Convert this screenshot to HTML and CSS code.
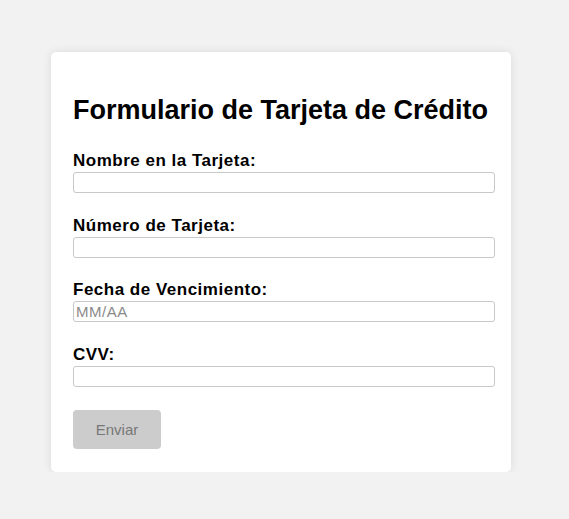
FILE: index.html
```html
<!DOCTYPE html>
<html lang="es">
<head>
<meta charset="utf-8">
<title>Formulario de Tarjeta de Crédito</title>
<link rel="stylesheet" href="styles.css">
</head>
<body>
<div class="card">
  <h2 class="title">Formulario de Tarjeta de Crédito</h2>
  <form class="form">
    <div class="group">
      <label class="label" for="nombre">Nombre en la Tarjeta:</label>
      <input class="input" id="nombre" type="text">
    </div>
    <div class="group">
      <label class="label" for="numero">Número de Tarjeta:</label>
      <input class="input" id="numero" type="text">
    </div>
    <div class="group">
      <label class="label" for="fecha">Fecha de Vencimiento:</label>
      <input class="input" id="fecha" type="text" placeholder="MM/AA">
    </div>
    <div class="group">
      <label class="label" for="cvv">CVV:</label>
      <input class="input" id="cvv" type="text">
    </div>
    <button class="button" type="button">Enviar</button>
  </form>
</div>
</body>
</html>
```
FILE: styles.css
```css
html, body {
  margin: 0;
  background: #f2f2f2;
}
body {
  padding: 52px 0 0 51px;
  font-family: "Liberation Sans", Arial, sans-serif;
}
.card {
  width: 416px;
  padding: 22px 22px 23px;
  background: #fff;
  border-radius: 5px;
  box-shadow: 0 0 10px rgba(0, 0, 0, 0.1);
}
.title {
  font-size: 27px;
  font-weight: bold;
  line-height: 31px;
  margin: 21px 0 25px;
  color: #000;
}
.group {
  margin-bottom: 22.67px;
}
.label {
  display: block;
  font-size: 17px;
  font-weight: bold;
  line-height: 20px;
  letter-spacing: 0.5px;
  margin-bottom: 1px;
  color: #000;
}
.input {
  display: block;
  width: 422px;
  height: 21px;
  margin: 0;
  padding: 1px 2px;
  border: 1px solid #c8c8c8;
  border-radius: 3px;
  box-sizing: border-box;
  font-family: "Liberation Sans", Arial, sans-serif;
  font-size: 15px;
  letter-spacing: 0.5px;
}
.input::placeholder {
  color: #8a8a8a;
}
.button {
  display: block;
  width: 88px;
  height: 39px;
  padding: 0;
  border: none;
  border-radius: 4px;
  background: #cccccc;
  color: #777;
  font-family: "Liberation Sans", Arial, sans-serif;
  font-size: 15px;
}
```
